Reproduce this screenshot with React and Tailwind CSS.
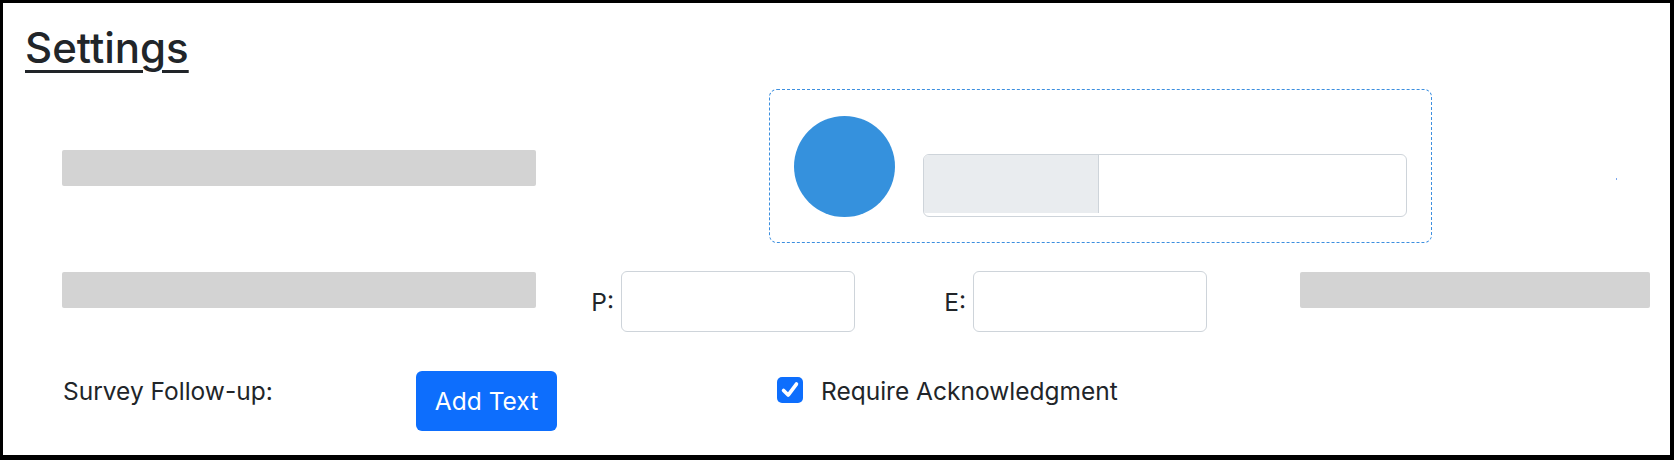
export default function App() {
  return (
    <div
      className="w-[1674px] h-[460px] bg-white border-black border-l-[3px] border-t-[3px] border-r-4 border-b-[5px] text-[#212529] overflow-hidden"
      style={{ fontFamily: 'Inter, "Noto Sans", sans-serif' }}
    >
      {/* Heading */}
      <h2 className="ml-[22px] mt-[21px] text-[42px] leading-[48px] font-medium underline decoration-[3px] underline-offset-[7px] w-fit">
        Settings
      </h2>

      {/* Row 1 */}
      <div className="flex items-center mt-[17px] h-[154px]">
        <div className="ml-[59px] mt-[4px] w-[474px] h-[36px] bg-[#d3d3d3] rounded-[2px]" />
        <div className="ml-[233px] w-[663px] h-[154px] border border-dashed border-[#3d8fdf] rounded-lg flex items-center pl-[24px]">
          <div className="w-[101px] h-[101px] rounded-full bg-[#3591dd] shrink-0" />
          <div className="ml-[28px] mt-[39px] w-[484px] h-[63px] border border-[#ced4da] rounded-md flex items-start overflow-hidden">
            <div className="w-[175px] h-[58px] bg-[#e9ecef] border-r border-[#ced4da]" />
          </div>
        </div>
        <span className="ml-[184px] mt-[26px] w-[1px] h-[2px] bg-[#7aa6ee]" />
      </div>

      {/* Row 2 */}
      <div className="flex items-start mt-[28px]">
        <div className="ml-[59px] mt-[1px] w-[474px] h-[36px] bg-[#d3d3d3] rounded-[2px]" />
        <div className="ml-[50px] flex items-center">
          <label className="w-[35px] pr-[7px] text-right text-[24.5px] leading-[36px]">P:</label>
          <input type="text" className="w-[234px] h-[61px] border border-[#ced4da] rounded-md outline-none" />
        </div>
        <div className="ml-[83px] flex items-center">
          <label className="w-[35px] pr-[7px] text-right text-[24.5px] leading-[36px]">E:</label>
          <input type="text" className="w-[234px] h-[61px] border border-[#ced4da] rounded-md outline-none" />
        </div>
        <div className="ml-[93px] mt-[1px] w-[350px] h-[36px] bg-[#d3d3d3] rounded-[2px]" />
      </div>

      {/* Row 3 */}
      <div className="flex items-start mt-[39px]">
        <div className="ml-[60px] w-[353px] mt-[2px] text-[24.5px] leading-[36px]">Survey Follow-up:</div>
        <button className="w-[141px] h-[60px] rounded-md bg-[#0d6efd] text-white text-[24.5px] leading-[36px]">
          Add Text
        </button>
        <div className="ml-[220px] mt-[6px] w-[26px] h-[26px] rounded-[5px] bg-[#0d6efd] flex items-center justify-center">
          <svg viewBox="0 0 24 24" className="w-[22px] h-[22px]" fill="none" stroke="white" strokeWidth="4" strokeLinecap="round" strokeLinejoin="round">
            <polyline points="5,12.5 10,17.5 19,5.5" />
          </svg>
        </div>
        <label className="ml-[18px] mt-[2px] text-[24.5px] leading-[36px]">Require Acknowledgment</label>
      </div>
    </div>
  );
}
